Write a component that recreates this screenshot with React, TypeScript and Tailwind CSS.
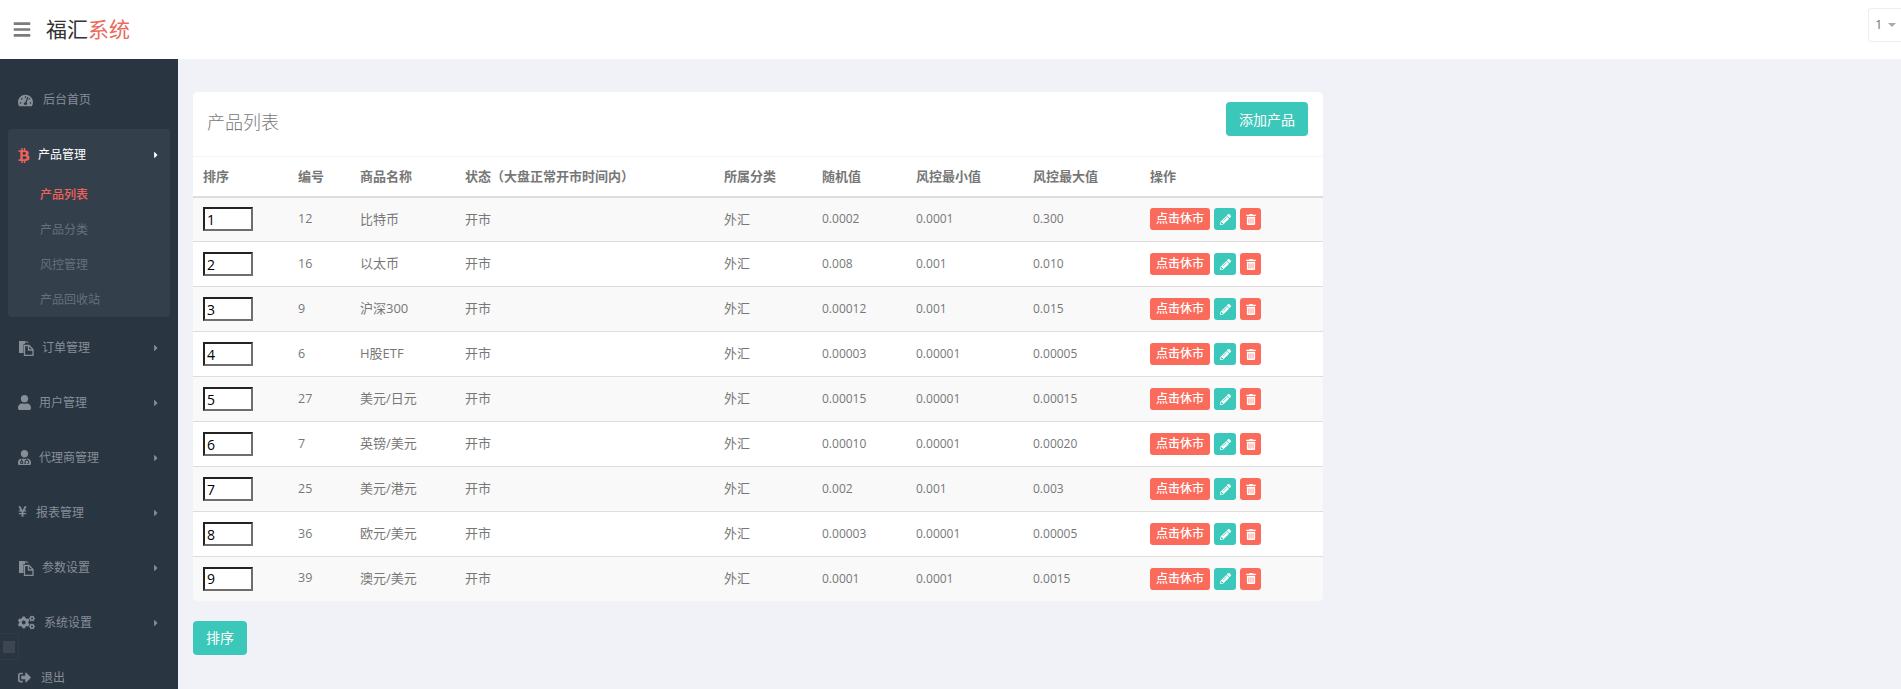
import React from 'react';
import {
  FaBars,
  FaBtc,
  FaCaretRight,
  FaCogs,
  FaPencilAlt,
  FaSignOutAlt,
  FaTachometerAlt,
  FaTrashAlt,
  FaUser,
  FaUserMd,
  FaYenSign,
} from 'react-icons/fa';

const products = [
  { sort: 1, id: 12, name: '比特币', rand: '0.0002', min: '0.0001', max: '0.300' },
  { sort: 2, id: 16, name: '以太币', rand: '0.008', min: '0.001', max: '0.010' },
  { sort: 3, id: 9, name: '沪深300', rand: '0.00012', min: '0.001', max: '0.015' },
  { sort: 4, id: 6, name: 'H股ETF', rand: '0.00003', min: '0.00001', max: '0.00005' },
  { sort: 5, id: 27, name: '美元/日元', rand: '0.00015', min: '0.00001', max: '0.00015' },
  { sort: 6, id: 7, name: '英镑/美元', rand: '0.00010', min: '0.00001', max: '0.00020' },
  { sort: 7, id: 25, name: '美元/港元', rand: '0.002', min: '0.001', max: '0.003' },
  { sort: 8, id: 36, name: '欧元/美元', rand: '0.00003', min: '0.00001', max: '0.00005' },
  { sort: 9, id: 39, name: '澳元/美元', rand: '0.0001', min: '0.0001', max: '0.0015' },
];

// 两张叠放的文件图标（实心底页 + 带折角的描边前页）
const FilesIcon: React.FC = () => (
  <svg viewBox="0 0 16 16" className="w-[16px] h-[16px]">
    <path d="M1 1h6v3H5.5v9H1z" fill="currentColor" />
    <path d="M7 1h2l2 2H7z" fill="currentColor" opacity="0.6" />
    <path d="M6.5 5.5h4.5l4 4v6h-8.500z" fill="none" stroke="currentColor" strokeWidth="1.300" />
    <path d="M10.500 5.500v4.500h4.500" fill="none" stroke="currentColor" strokeWidth="1.300" />
  </svg>
);

const menuAfter = [
  { label: '订单管理', icon: <FilesIcon />, gap: 'gap-[8px]' },
  { label: '用户管理', icon: <FaUser className="w-[13px] h-[15px]" />, gap: 'gap-[8px]' },
  { label: '代理商管理', icon: <FaUserMd className="w-[13px] h-[15px]" />, gap: 'gap-[8px]' },
  { label: '报表管理', icon: <FaYenSign className="w-[9px] h-[13px] mb-[3px]" />, gap: 'gap-[9px]' },
  { label: '参数设置', icon: <FilesIcon />, gap: 'gap-[8px]' },
  { label: '系统设置', icon: <FaCogs className="w-[17px] h-[15px]" />, gap: 'gap-[9px]' },
];

const subMenu = ['产品列表', '产品分类', '风控管理', '产品回收站'];
const columns = ['排序', '编号', '商品名称', '状态（大盘正常开市时间内）', '所属分类', '随机值', '风控最小值', '风控最大值', '操作'];

const Sidebar: React.FC = () => (
  <aside className="relative w-[178px] shrink-0 h-[630px] bg-[#2a3542] text-[#868e98] text-[12px] overflow-hidden">
    <div className="h-[70px] pt-[12px] pl-[18px] flex items-center gap-[10px]">
      <FaTachometerAlt className="w-[15px] h-[15px]" />
      <span>后台首页</span>
    </div>

    <div className="mx-[8px] h-[188px] rounded bg-[#343f4c]">
      <div className="h-[52px] pl-[10px] pr-[10px] flex items-center text-white">
        <FaBtc className="w-[12px] h-[15px] text-[#f0625a] mr-[8px]" />
        <span className="flex-1">产品管理</span>
        <FaCaretRight className="w-[8px] h-[10px]" />
      </div>
      <div className="pl-[32px] mt-[-4px]">
        {subMenu.map((item, i) => (
          <div key={item} className={`h-[35px] flex items-center ${i === 0 ? 'text-[#f0625a] font-medium' : 'text-[#66707c]'}`}>
            {item}
          </div>
        ))}
      </div>
    </div>

    <div className="pt-[3px]">
      {menuAfter.map(item => (
        <div key={item.label} className="h-[55px] pl-[18px] pr-[18px] flex items-center">
          <span className={`flex items-center flex-1 ${item.gap}`}>
            {item.icon}
            <span>{item.label}</span>
          </span>
          <FaCaretRight className="w-[8px] h-[10px]" />
        </div>
      ))}
    </div>

    <div className="h-[55px] pl-[18px] flex items-center gap-[10px]">
      <FaSignOutAlt className="w-[13px] h-[13px]" />
      <span>退出</span>
    </div>

    {/* 左下角的小方块 */}
    <div className="absolute left-0 top-[574px] w-[19px] h-[27px] flex items-center justify-center border border-l-0 border-[#303b48]">
      <div className="w-[12px] h-[12px] bg-[#3c4651]" />
    </div>
  </aside>
);

const ProductTable: React.FC = () => (
  <table className="w-full table-fixed border-collapse text-[13px] text-[#777]">
    <colgroup>
      <col className="w-[95px]" />
      <col className="w-[62px]" />
      <col className="w-[105px]" />
      <col className="w-[259px]" />
      <col className="w-[98px]" />
      <col className="w-[94px]" />
      <col className="w-[117px]" />
      <col className="w-[117px]" />
      <col />
    </colgroup>
    <thead>
      <tr className="h-[40px] border-t border-[#f3f4f5] border-b-2 border-b-[#dddddd]">
        {columns.map(col => (
          <th key={col} className="px-[10px] text-left font-bold text-[13px] whitespace-nowrap">
            {col}
          </th>
        ))}
      </tr>
    </thead>
    <tbody>
      {products.map((p, i) => {
        const isLast = i === products.length - 1;
        return (
          <tr key={p.id} className={`${isLast ? 'h-[44px]' : 'h-[45px] border-b border-[#dddddd]'} ${i % 2 === 0 ? 'bg-[#f9f9f9]' : 'bg-white'}`}>
            <td className="px-[10px]">
              <input
                readOnly
                value={p.sort}
                className="block w-[50px] h-[24px] bg-white pl-[2px] text-[14px] text-black outline-none border-2 border-t-[#222222] border-l-[#222222] border-r-[#6e6e6e] border-b-[#6e6e6e]"
              />
            </td>
            <td className="px-[10px] text-[12.5px]">{p.id}</td>
            <td className="px-[10px]">{p.name}</td>
            <td className="px-[10px]">开市</td>
            <td className="px-[10px]">外汇</td>
            <td className="px-[10px] text-[12px]">{p.rand}</td>
            <td className="px-[10px] text-[12px]">{p.min}</td>
            <td className="px-[10px] text-[12px]">{p.max}</td>
            <td className="px-[10px]">
              <div className="flex items-center gap-[4px]">
                <button className="w-[60px] h-[22px] rounded-[3px] bg-[#fb6b5b] text-white text-[12px] font-medium">点击休市</button>
                <button className="w-[22px] h-[22px] rounded-[3px] bg-[#3cc7bb] text-white flex items-center justify-center">
                  <FaPencilAlt className="w-[11px] h-[11px]" />
                </button>
                <button className="w-[21px] h-[22px] rounded-[3px] bg-[#fb6b5b] text-white flex items-center justify-center">
                  <FaTrashAlt className="w-[10px] h-[11px]" />
                </button>
              </div>
            </td>
          </tr>
        );
      })}
    </tbody>
  </table>
);

const App: React.FC = () => (
  <div className="h-[689px] overflow-hidden bg-[#f0f2f7] font-['Open_Sans','Noto_Sans_CJK_SC',sans-serif]">
    <header className="h-[59px] bg-white flex items-center pl-[13px]">
      <FaBars className="w-[18px] h-[19px] text-[#7b7b7b]" />
      <div className="ml-[15px] text-[21px] text-[#333]">
        福汇<span className="text-[#ea6a60]">系统</span>
      </div>
      <div className="ml-auto mt-[-10px] w-[33px] h-[34px] rounded-l border border-r-0 border-[#eeeeee] flex items-center pl-[6px] gap-[6px] text-[13px] text-[#777]">
        <span>1</span>
        <span className="w-0 h-0 border-x-[4px] border-x-transparent border-t-[4px] border-t-[#aaaaaa]" />
      </div>
    </header>

    <div className="flex">
      <Sidebar />
      <main className="flex-1 pt-[33px] pl-[15px]">
        <section className="w-[1130px] rounded-[5px] bg-white overflow-hidden">
          <div className="h-[64px] pl-[14px] pr-[15px] flex items-center justify-between">
            <h2 className="mb-[4px] text-[18px] font-light text-[#777]">产品列表</h2>
            <button className="w-[82px] h-[34px] mb-[10px] rounded bg-[#3cc7bb] text-white text-[14px]">添加产品</button>
          </div>
          <ProductTable />
        </section>
        <button className="mt-[20px] w-[54px] h-[34px] rounded bg-[#3cc7bb] text-white text-[14px]">排序</button>
      </main>
    </div>
  </div>
);

export default App;
